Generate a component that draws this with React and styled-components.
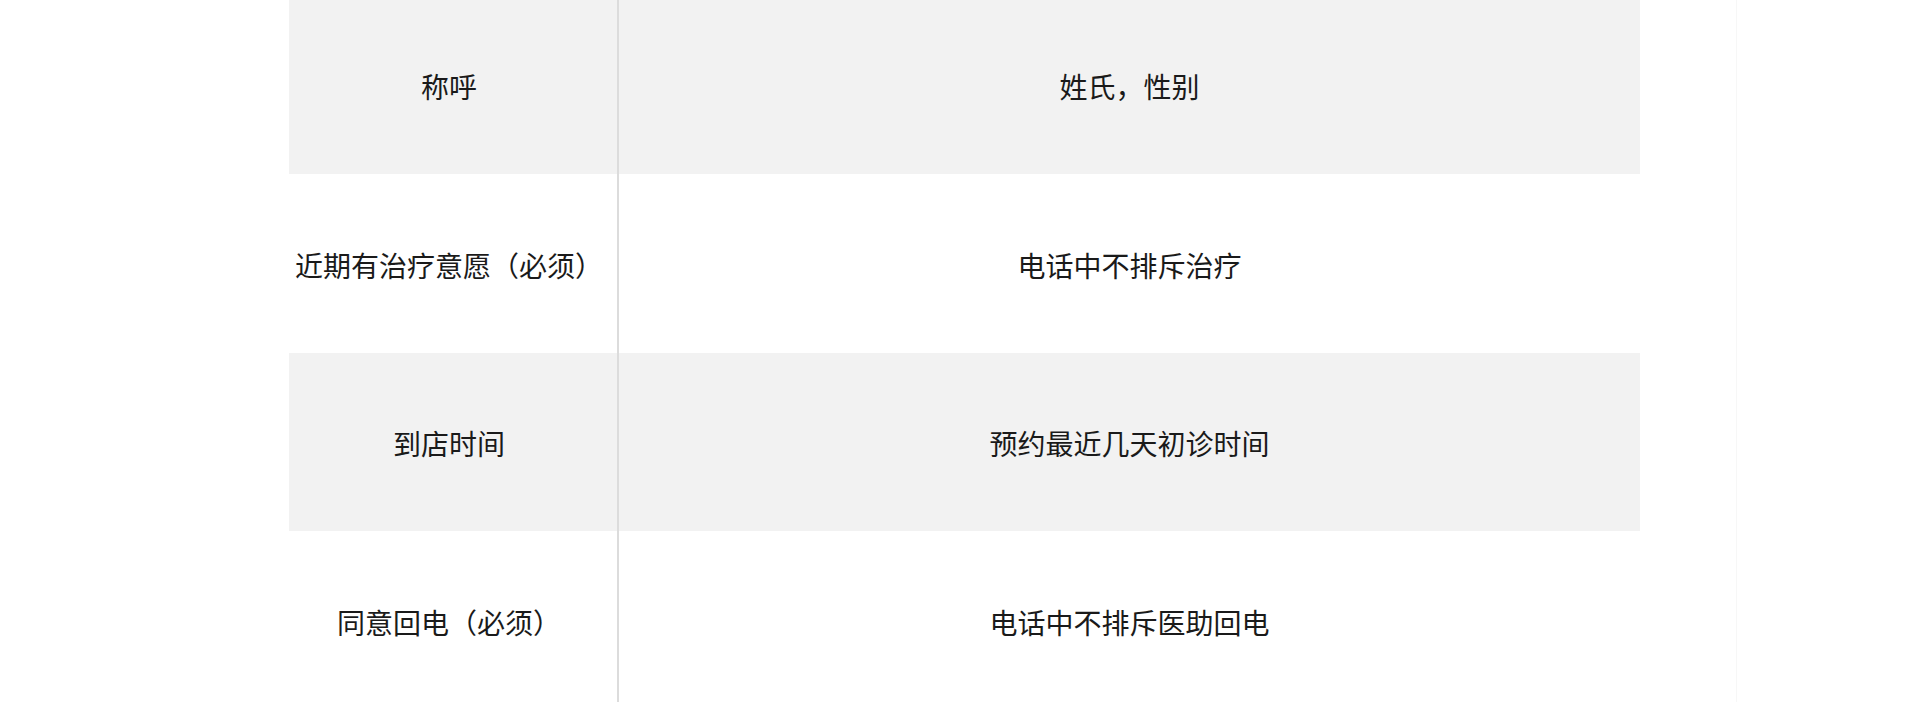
import React from 'react';
import styled, { createGlobalStyle } from 'styled-components';

const GlobalStyle = createGlobalStyle`
    html, body {
        margin: 0;
        padding: 0;
        background: #ffffff;
        overflow: hidden;
    }
    body {
        font-family: "Microsoft YaHei", "Noto Sans CJK SC", "Noto Sans", sans-serif;
    }
`;

const Page = styled.div`
    width: 1736px;
    height: 702px;
    border-right: 1px solid #f7f7f7;
    overflow: hidden;
`;

const Table = styled.div`
    margin-left: 289px;
    margin-top: -4.5px;
    width: 1351px;
    display: flex;
    flex-direction: column;
`;

const Row = styled.div`
    display: grid;
    grid-template-columns: 328px 2px 1fr;
    height: 178.5px;
    background: ${props => (props.$shaded ? '#f2f2f2' : '#ffffff')};
`;

const Cell = styled.div`
    display: flex;
    align-items: center;
    justify-content: center;
    font-size: 28px;
    color: #1a1a1a;
    white-space: nowrap;
    padding-top: 3px;
`;

const Label = styled(Cell)`
    padding-right: 8px;
`;

const Divider = styled.div`
    background: #dcdcdc;
`;

const rows = [
    { label: '称呼', value: '姓氏，性别' },
    { label: '近期有治疗意愿（必须）', value: '电话中不排斥治疗' },
    { label: '到店时间', value: '预约最近几天初诊时间' },
    { label: '同意回电（必须）', value: '电话中不排斥医助回电' },
];

const App = () => {
    return (
        <>
            <GlobalStyle />
            <Page>
                <Table>
                    {rows.map((row, i) => (
                        <Row key={row.label} $shaded={i % 2 === 0}>
                            <Label>{row.label}</Label>
                            <Divider />
                            <Cell>{row.value}</Cell>
                        </Row>
                    ))}
                </Table>
            </Page>
        </>
    );
};

export default App;
